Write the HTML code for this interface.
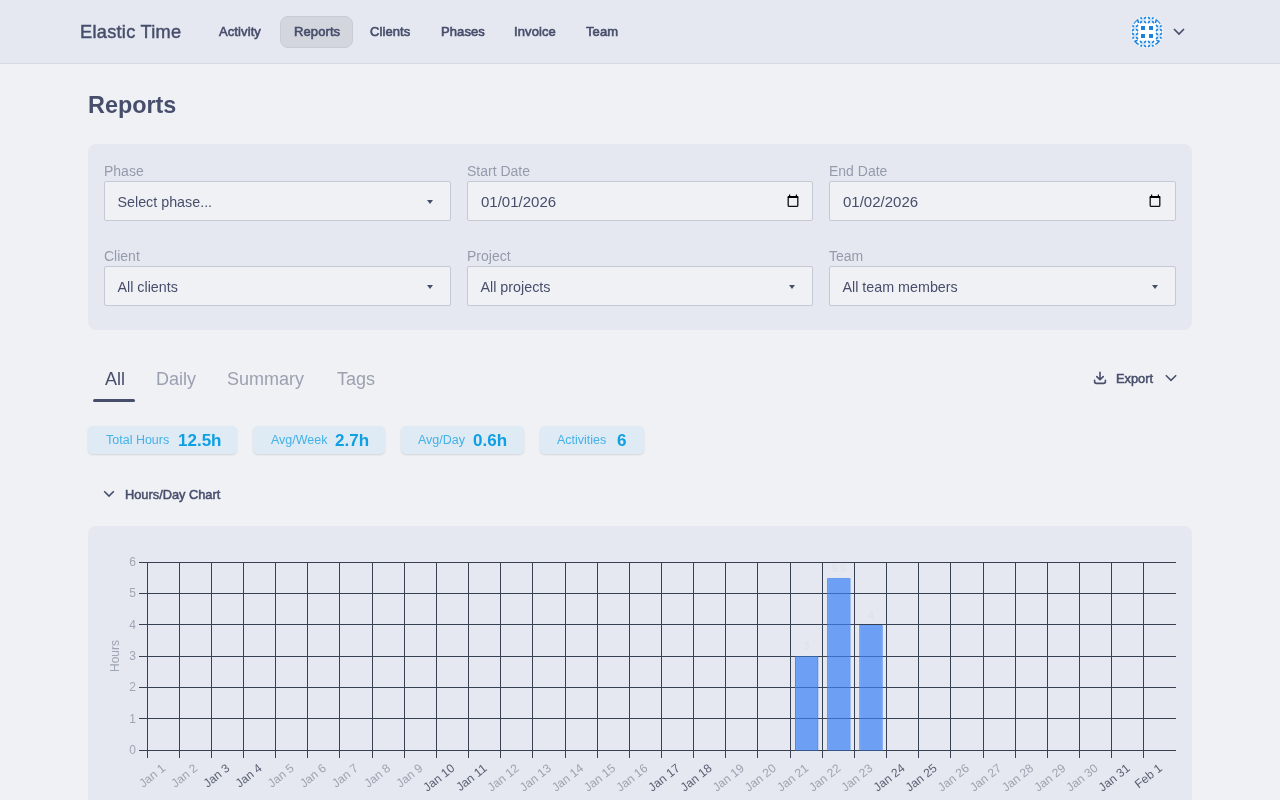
<!DOCTYPE html>
<html><head><meta charset="utf-8">
<style>
*{box-sizing:border-box;margin:0;padding:0}
html,body{width:1280px;height:800px;overflow:hidden;background:#f0f1f5;font-family:"Liberation Sans",sans-serif;color:#474e6b}
.abs{position:absolute}
#hdr{position:absolute;left:0;top:0;width:1280px;height:64px;background:#e5e8f0;border-bottom:1px solid #d6dae3}
.brand{left:80px;top:21.5px;font-size:18.2px;font-weight:normal;-webkit-text-stroke:0.45px #474e6b;letter-spacing:0.28px;white-space:nowrap;line-height:20px}
.nav{top:25px;font-size:13px;font-weight:normal;-webkit-text-stroke:0.6px #474e6b;letter-spacing:0.1px;white-space:nowrap;line-height:14px}
.pill{left:280px;top:16px;width:73px;height:32px;background:#d3d6dd;border:1px solid #c8ccd4;border-radius:8px}
h1{position:absolute;left:88px;top:92px;font-size:23.4px;font-weight:bold;line-height:26px;white-space:nowrap}
.panel{position:absolute;left:88px;top:144px;width:1104px;height:186px;background:#e5e8f0;border-radius:8px}
.lbl{position:absolute;font-size:14px;color:#959bac;line-height:16px;white-space:nowrap}
.inp{position:absolute;width:347px;height:40px;background:#f0f1f5;border:1px solid #c5c9d4;border-radius:2px}
.inp span{position:absolute;left:12.5px;top:12.3px;font-size:14.3px;line-height:16px;color:#474e6b;white-space:nowrap}
.caret{position:absolute;right:17px;top:18px;width:0;height:0;border-left:3.5px solid transparent;border-right:3.5px solid transparent;border-top:4px solid #474e6b}
.inp span.dt{font-size:15px;top:12px;left:13px}
.cal{position:absolute;right:14px;top:12px;width:12px;height:14px}
.tab{position:absolute;top:369px;font-size:18px;line-height:20px;color:#9ba1b1;white-space:nowrap}
.chip{position:absolute;top:426px;height:28px;background:#deeaf4;border-radius:5px;box-shadow:0 1px 2px rgba(0,0,0,0.12)}
.chip .l{position:absolute;top:8px;font-size:12.5px;line-height:13px;color:#45b2e6;white-space:nowrap}
.chip .v{position:absolute;top:6px;font-size:17px;line-height:18px;font-weight:bold;color:#0ea0e2;white-space:nowrap}
.chart{position:absolute;left:88px;top:526px;width:1104px;height:300px;background:#e5e8f0;border-radius:8px}
</style></head><body>
<div id="root" style="position:absolute;left:0;top:0;width:1280px;height:800px;will-change:transform">
<div id="hdr">
  <div class="abs brand">Elastic Time</div>
  <div class="abs pill"></div>
  <div class="abs nav" style="left:219px">Activity</div>
  <div class="abs nav" style="left:294px">Reports</div>
  <div class="abs nav" style="left:370px">Clients</div>
  <div class="abs nav" style="left:441px">Phases</div>
  <div class="abs nav" style="left:514px">Invoice</div>
  <div class="abs nav" style="left:586px">Team</div>
  <svg class="abs" style="left:1131px;top:16px" width="32" height="32" viewBox="0 0 32 32">
    <defs><clipPath id="avc"><circle cx="16" cy="16" r="16"/></clipPath></defs>
    <g clip-path="url(#avc)">
    <rect width="32" height="32" fill="#fff"/>
    <g fill="#1a82dc">
      <rect x="10" y="10" width="4" height="4"/><rect x="18" y="10" width="4" height="4"/>
      <rect x="10" y="18" width="4" height="4"/><rect x="18" y="18" width="4" height="4"/>
    </g>
    <path d="M8.5 4H15.5M12 0.5V7.5" stroke="#b3d7f4" stroke-width="1.1"/><ellipse cx="9.9" cy="1.9" rx="1.5" ry="0.95" transform="rotate(45 9.9 1.9)" fill="#1a82dc"/><ellipse cx="14.1" cy="1.9" rx="1.5" ry="0.95" transform="rotate(-45 14.1 1.9)" fill="#1a82dc"/><ellipse cx="9.9" cy="6.1" rx="1.5" ry="0.95" transform="rotate(-45 9.9 6.1)" fill="#1a82dc"/><ellipse cx="14.1" cy="6.1" rx="1.5" ry="0.95" transform="rotate(45 14.1 6.1)" fill="#1a82dc"/><path d="M16.5 4H23.5M20 0.5V7.5" stroke="#b3d7f4" stroke-width="1.1"/><ellipse cx="17.9" cy="1.9" rx="1.5" ry="0.95" transform="rotate(45 17.9 1.9)" fill="#1a82dc"/><ellipse cx="22.1" cy="1.9" rx="1.5" ry="0.95" transform="rotate(-45 22.1 1.9)" fill="#1a82dc"/><ellipse cx="17.9" cy="6.1" rx="1.5" ry="0.95" transform="rotate(-45 17.9 6.1)" fill="#1a82dc"/><ellipse cx="22.1" cy="6.1" rx="1.5" ry="0.95" transform="rotate(45 22.1 6.1)" fill="#1a82dc"/><path d="M8.5 28H15.5M12 24.5V31.5" stroke="#b3d7f4" stroke-width="1.1"/><ellipse cx="9.9" cy="25.9" rx="1.5" ry="0.95" transform="rotate(45 9.9 25.9)" fill="#1a82dc"/><ellipse cx="14.1" cy="25.9" rx="1.5" ry="0.95" transform="rotate(-45 14.1 25.9)" fill="#1a82dc"/><ellipse cx="9.9" cy="30.1" rx="1.5" ry="0.95" transform="rotate(-45 9.9 30.1)" fill="#1a82dc"/><ellipse cx="14.1" cy="30.1" rx="1.5" ry="0.95" transform="rotate(45 14.1 30.1)" fill="#1a82dc"/><path d="M16.5 28H23.5M20 24.5V31.5" stroke="#b3d7f4" stroke-width="1.1"/><ellipse cx="17.9" cy="25.9" rx="1.5" ry="0.95" transform="rotate(45 17.9 25.9)" fill="#1a82dc"/><ellipse cx="22.1" cy="25.9" rx="1.5" ry="0.95" transform="rotate(-45 22.1 25.9)" fill="#1a82dc"/><ellipse cx="17.9" cy="30.1" rx="1.5" ry="0.95" transform="rotate(-45 17.9 30.1)" fill="#1a82dc"/><ellipse cx="22.1" cy="30.1" rx="1.5" ry="0.95" transform="rotate(45 22.1 30.1)" fill="#1a82dc"/><path d="M0.5 12H7.5M4 8.5V15.5" stroke="#b3d7f4" stroke-width="1.1"/><ellipse cx="1.9" cy="9.9" rx="1.5" ry="0.95" transform="rotate(45 1.9 9.9)" fill="#1a82dc"/><ellipse cx="6.1" cy="9.9" rx="1.5" ry="0.95" transform="rotate(-45 6.1 9.9)" fill="#1a82dc"/><ellipse cx="1.9" cy="14.1" rx="1.5" ry="0.95" transform="rotate(-45 1.9 14.1)" fill="#1a82dc"/><ellipse cx="6.1" cy="14.1" rx="1.5" ry="0.95" transform="rotate(45 6.1 14.1)" fill="#1a82dc"/><path d="M0.5 20H7.5M4 16.5V23.5" stroke="#b3d7f4" stroke-width="1.1"/><ellipse cx="1.9" cy="17.9" rx="1.5" ry="0.95" transform="rotate(45 1.9 17.9)" fill="#1a82dc"/><ellipse cx="6.1" cy="17.9" rx="1.5" ry="0.95" transform="rotate(-45 6.1 17.9)" fill="#1a82dc"/><ellipse cx="1.9" cy="22.1" rx="1.5" ry="0.95" transform="rotate(-45 1.9 22.1)" fill="#1a82dc"/><ellipse cx="6.1" cy="22.1" rx="1.5" ry="0.95" transform="rotate(45 6.1 22.1)" fill="#1a82dc"/><path d="M24.5 12H31.5M28 8.5V15.5" stroke="#b3d7f4" stroke-width="1.1"/><ellipse cx="25.9" cy="9.9" rx="1.5" ry="0.95" transform="rotate(45 25.9 9.9)" fill="#1a82dc"/><ellipse cx="30.1" cy="9.9" rx="1.5" ry="0.95" transform="rotate(-45 30.1 9.9)" fill="#1a82dc"/><ellipse cx="25.9" cy="14.1" rx="1.5" ry="0.95" transform="rotate(-45 25.9 14.1)" fill="#1a82dc"/><ellipse cx="30.1" cy="14.1" rx="1.5" ry="0.95" transform="rotate(45 30.1 14.1)" fill="#1a82dc"/><path d="M24.5 20H31.5M28 16.5V23.5" stroke="#b3d7f4" stroke-width="1.1"/><ellipse cx="25.9" cy="17.9" rx="1.5" ry="0.95" transform="rotate(45 25.9 17.9)" fill="#1a82dc"/><ellipse cx="30.1" cy="17.9" rx="1.5" ry="0.95" transform="rotate(-45 30.1 17.9)" fill="#1a82dc"/><ellipse cx="25.9" cy="22.1" rx="1.5" ry="0.95" transform="rotate(-45 25.9 22.1)" fill="#1a82dc"/><ellipse cx="30.1" cy="22.1" rx="1.5" ry="0.95" transform="rotate(45 30.1 22.1)" fill="#1a82dc"/><path d="M2.4 7.6L6.5 3.3L7.6 7" fill="none" stroke="#1a82dc" stroke-width="1.6"/><path d="M29.6 7.6L25.5 3.3L24.4 7" fill="none" stroke="#1a82dc" stroke-width="1.6"/><path d="M6.6 24.3L3.4 25.4L7.6 28.6" fill="none" stroke="#1a82dc" stroke-width="1.6"/><path d="M25.4 24.3L28.6 25.4L24.4 28.6" fill="none" stroke="#1a82dc" stroke-width="1.6"/>
    </g>
  </svg>
  <svg class="abs" style="left:1172px;top:27px" width="14" height="10" viewBox="0 0 14 10"><path d="M2 2 L7 7 L12 2" fill="none" stroke="#474e6b" stroke-width="1.7"/></svg>
</div>

<h1>Reports</h1>

<div class="panel"></div>
<div class="lbl" style="left:104px;top:163px">Phase</div>
<div class="lbl" style="left:467px;top:163px">Start Date</div>
<div class="lbl" style="left:829px;top:163px">End Date</div>
<div class="inp" style="left:104px;top:181px"><span>Select phase...</span><i class="caret"></i></div>
<div class="inp" style="left:467px;top:181px;width:346px"><span class="dt">01/01/2026</span><svg class="cal" style="right:13px" viewBox="0 0 12 14"><path d="M2.6 0.6v2M9.4 0.6v2" stroke="#000" stroke-width="1.2"/><rect x="1.2" y="2.6" width="9.6" height="9.8" rx="1" fill="none" stroke="#111" stroke-width="1.3"/><rect x="0.8" y="2" width="10.4" height="2" fill="#000"/></svg></div>
<div class="inp" style="left:829px;top:181px"><span class="dt">01/02/2026</span><svg class="cal" viewBox="0 0 12 14"><path d="M2.6 0.6v2M9.4 0.6v2" stroke="#000" stroke-width="1.2"/><rect x="1.2" y="2.6" width="9.6" height="9.8" rx="1" fill="none" stroke="#111" stroke-width="1.3"/><rect x="0.8" y="2" width="10.4" height="2" fill="#000"/></svg></div>
<div class="lbl" style="left:104px;top:248px">Client</div>
<div class="lbl" style="left:467px;top:248px">Project</div>
<div class="lbl" style="left:829px;top:248px">Team</div>
<div class="inp" style="left:104px;top:266px"><span>All clients</span><i class="caret"></i></div>
<div class="inp" style="left:467px;top:266px;width:346px"><span>All projects</span><i class="caret"></i></div>
<div class="inp" style="left:829px;top:266px"><span>All team members</span><i class="caret"></i></div>

<div class="tab" style="left:105px;color:#474e6b">All</div>
<div class="tab" style="left:156px">Daily</div>
<div class="tab" style="left:227px">Summary</div>
<div class="tab" style="left:337px">Tags</div>
<div class="abs" style="left:93px;top:399px;width:42px;height:3px;border-radius:2px;background:#474e6b"></div>

<div class="chip" style="left:88px;width:149px"><span class="l" style="left:18px">Total Hours</span><span class="v" style="left:90px">12.5h</span></div>
<div class="chip" style="left:253px;width:132px"><span class="l" style="left:18px">Avg/Week</span><span class="v" style="left:82px">2.7h</span></div>
<div class="chip" style="left:401px;width:123px"><span class="l" style="left:17px">Avg/Day</span><span class="v" style="left:72px">0.6h</span></div>
<div class="chip" style="left:540px;width:104px"><span class="l" style="left:17px">Activities</span><span class="v" style="left:77px">6</span></div>


<svg class="abs" style="left:102px;top:488px" width="14" height="12" viewBox="0 0 14 12"><path d="M2.2 3.2 L7 8 L11.8 3.2" fill="none" stroke="#474e6b" stroke-width="1.6"/></svg>
<div class="abs" style="left:125px;top:487.5px;font-size:12.8px;line-height:14px;-webkit-text-stroke:0.5px #474e6b;white-space:nowrap">Hours/Day Chart</div>
<svg class="abs" style="left:1093px;top:371px" width="14" height="14" viewBox="0 0 14 14"><path d="M7 1.2 V8.6 M3.8 5.6 L7 8.8 L10.2 5.6 M1.6 9.2 V10.6 Q1.6 12.4 3.4 12.4 H10.6 Q12.4 12.4 12.4 10.6 V9.2" fill="none" stroke="#474e6b" stroke-width="1.6" stroke-linecap="round" stroke-linejoin="round"/></svg>
<div class="abs" style="left:1116px;top:371.5px;font-size:12.8px;line-height:14px;-webkit-text-stroke:0.5px #474e6b;white-space:nowrap">Export</div>
<svg class="abs" style="left:1164px;top:372px" width="14" height="12" viewBox="0 0 14 12"><path d="M1.8 3.2 L7 8.4 L12.2 3.2" fill="none" stroke="#474e6b" stroke-width="1.5"/></svg>
<div class="chart"></div>
<!--CHART--><svg class="abs" style="left:0;top:0;will-change:transform" width="1280" height="800" viewBox="0 0 1280 800">
<text x="806.66" y="650.20" text-anchor="middle" font-size="10.5" font-weight="bold" fill="#dfe2e9">3</text>
<text x="838.81" y="571.87" text-anchor="middle" font-size="10.5" font-weight="bold" fill="#dfe2e9">5.5</text>
<text x="870.97" y="618.87" text-anchor="middle" font-size="10.5" font-weight="bold" fill="#dfe2e9">4</text>
<rect x="139" y="750" width="1037" height="1" fill="#374151"/>
<rect x="139" y="718" width="1037" height="1" fill="#374151"/>
<rect x="139" y="687" width="1037" height="1" fill="#374151"/>
<rect x="139" y="656" width="1037" height="1" fill="#374151"/>
<rect x="139" y="624" width="1037" height="1" fill="#374151"/>
<rect x="139" y="593" width="1037" height="1" fill="#374151"/>
<rect x="139" y="562" width="1037" height="1" fill="#374151"/>
<rect x="147" y="562" width="1" height="196" fill="#374151"/>
<rect x="179" y="562" width="1" height="196" fill="#374151"/>
<rect x="211" y="562" width="1" height="196" fill="#374151"/>
<rect x="243" y="562" width="1" height="196" fill="#374151"/>
<rect x="275" y="562" width="1" height="196" fill="#374151"/>
<rect x="307" y="562" width="1" height="196" fill="#374151"/>
<rect x="339" y="562" width="1" height="196" fill="#374151"/>
<rect x="372" y="562" width="1" height="196" fill="#374151"/>
<rect x="404" y="562" width="1" height="196" fill="#374151"/>
<rect x="436" y="562" width="1" height="196" fill="#374151"/>
<rect x="468" y="562" width="1" height="196" fill="#374151"/>
<rect x="500" y="562" width="1" height="196" fill="#374151"/>
<rect x="532" y="562" width="1" height="196" fill="#374151"/>
<rect x="565" y="562" width="1" height="196" fill="#374151"/>
<rect x="597" y="562" width="1" height="196" fill="#374151"/>
<rect x="629" y="562" width="1" height="196" fill="#374151"/>
<rect x="661" y="562" width="1" height="196" fill="#374151"/>
<rect x="693" y="562" width="1" height="196" fill="#374151"/>
<rect x="725" y="562" width="1" height="196" fill="#374151"/>
<rect x="757" y="562" width="1" height="196" fill="#374151"/>
<rect x="790" y="562" width="1" height="196" fill="#374151"/>
<rect x="822" y="562" width="1" height="196" fill="#374151"/>
<rect x="854" y="562" width="1" height="196" fill="#374151"/>
<rect x="886" y="562" width="1" height="196" fill="#374151"/>
<rect x="918" y="562" width="1" height="196" fill="#374151"/>
<rect x="950" y="562" width="1" height="196" fill="#374151"/>
<rect x="983" y="562" width="1" height="196" fill="#374151"/>
<rect x="1015" y="562" width="1" height="196" fill="#374151"/>
<rect x="1047" y="562" width="1" height="196" fill="#374151"/>
<rect x="1079" y="562" width="1" height="196" fill="#374151"/>
<rect x="1111" y="562" width="1" height="196" fill="#374151"/>
<rect x="1143" y="562" width="1" height="196" fill="#374151"/>
<path d="M795.08 750.5V656.50H818.23V750.5Z M796.08 750.5V657.50H817.23V750.5Z" fill="rgb(59,130,246)" fill-rule="evenodd"/>
<rect x="796.08" y="657.50" width="21.15" height="93.00" fill="rgba(59,130,246,0.7)"/>
<path d="M827.24 750.5V578.17H850.39V750.5Z M828.24 750.5V579.17H849.39V750.5Z" fill="rgb(59,130,246)" fill-rule="evenodd"/>
<rect x="828.24" y="579.17" width="21.15" height="171.33" fill="rgba(59,130,246,0.7)"/>
<path d="M859.39 750.5V625.17H882.54V750.5Z M860.39 750.5V626.17H881.54V750.5Z" fill="rgb(59,130,246)" fill-rule="evenodd"/>
<rect x="860.39" y="626.17" width="21.15" height="124.33" fill="rgba(59,130,246,0.7)"/>
<text x="136" y="754.00" text-anchor="end" font-size="12" fill="#a0a5b3">0</text>
<text x="136" y="722.67" text-anchor="end" font-size="12" fill="#a0a5b3">1</text>
<text x="136" y="691.33" text-anchor="end" font-size="12" fill="#a0a5b3">2</text>
<text x="136" y="660.00" text-anchor="end" font-size="12" fill="#a0a5b3">3</text>
<text x="136" y="628.67" text-anchor="end" font-size="12" fill="#a0a5b3">4</text>
<text x="136" y="597.33" text-anchor="end" font-size="12" fill="#a0a5b3">5</text>
<text x="136" y="566.00" text-anchor="end" font-size="12" fill="#a0a5b3">6</text>
<text transform="translate(115,656) rotate(-90)" y="4.16" text-anchor="middle" font-size="12" fill="#a0a5b3">Hours</text>
<text transform="translate(163.58,766.45) rotate(-38.3)" y="4.16" text-anchor="end" font-size="12" fill="#9ea3b1">Jan 1</text>
<text transform="translate(195.73,766.45) rotate(-38.3)" y="4.16" text-anchor="end" font-size="12" fill="#9ea3b1">Jan 2</text>
<text transform="translate(227.88,766.45) rotate(-38.3)" y="4.16" text-anchor="end" font-size="12" fill="#5a6073">Jan 3</text>
<text transform="translate(260.04,766.45) rotate(-38.3)" y="4.16" text-anchor="end" font-size="12" fill="#5a6073">Jan 4</text>
<text transform="translate(292.19,766.45) rotate(-38.3)" y="4.16" text-anchor="end" font-size="12" fill="#9ea3b1">Jan 5</text>
<text transform="translate(324.35,766.45) rotate(-38.3)" y="4.16" text-anchor="end" font-size="12" fill="#9ea3b1">Jan 6</text>
<text transform="translate(356.50,766.45) rotate(-38.3)" y="4.16" text-anchor="end" font-size="12" fill="#9ea3b1">Jan 7</text>
<text transform="translate(388.66,766.45) rotate(-38.3)" y="4.16" text-anchor="end" font-size="12" fill="#9ea3b1">Jan 8</text>
<text transform="translate(420.81,766.45) rotate(-38.3)" y="4.16" text-anchor="end" font-size="12" fill="#9ea3b1">Jan 9</text>
<text transform="translate(452.96,766.45) rotate(-38.3)" y="4.16" text-anchor="end" font-size="12" fill="#5a6073">Jan 10</text>
<text transform="translate(485.12,766.45) rotate(-38.3)" y="4.16" text-anchor="end" font-size="12" fill="#5a6073">Jan 11</text>
<text transform="translate(517.27,766.45) rotate(-38.3)" y="4.16" text-anchor="end" font-size="12" fill="#9ea3b1">Jan 12</text>
<text transform="translate(549.43,766.45) rotate(-38.3)" y="4.16" text-anchor="end" font-size="12" fill="#9ea3b1">Jan 13</text>
<text transform="translate(581.58,766.45) rotate(-38.3)" y="4.16" text-anchor="end" font-size="12" fill="#9ea3b1">Jan 14</text>
<text transform="translate(613.73,766.45) rotate(-38.3)" y="4.16" text-anchor="end" font-size="12" fill="#9ea3b1">Jan 15</text>
<text transform="translate(645.89,766.45) rotate(-38.3)" y="4.16" text-anchor="end" font-size="12" fill="#9ea3b1">Jan 16</text>
<text transform="translate(678.04,766.45) rotate(-38.3)" y="4.16" text-anchor="end" font-size="12" fill="#5a6073">Jan 17</text>
<text transform="translate(710.20,766.45) rotate(-38.3)" y="4.16" text-anchor="end" font-size="12" fill="#5a6073">Jan 18</text>
<text transform="translate(742.35,766.45) rotate(-38.3)" y="4.16" text-anchor="end" font-size="12" fill="#9ea3b1">Jan 19</text>
<text transform="translate(774.50,766.45) rotate(-38.3)" y="4.16" text-anchor="end" font-size="12" fill="#9ea3b1">Jan 20</text>
<text transform="translate(806.66,766.45) rotate(-38.3)" y="4.16" text-anchor="end" font-size="12" fill="#9ea3b1">Jan 21</text>
<text transform="translate(838.81,766.45) rotate(-38.3)" y="4.16" text-anchor="end" font-size="12" fill="#9ea3b1">Jan 22</text>
<text transform="translate(870.97,766.45) rotate(-38.3)" y="4.16" text-anchor="end" font-size="12" fill="#9ea3b1">Jan 23</text>
<text transform="translate(903.12,766.45) rotate(-38.3)" y="4.16" text-anchor="end" font-size="12" fill="#5a6073">Jan 24</text>
<text transform="translate(935.27,766.45) rotate(-38.3)" y="4.16" text-anchor="end" font-size="12" fill="#5a6073">Jan 25</text>
<text transform="translate(967.43,766.45) rotate(-38.3)" y="4.16" text-anchor="end" font-size="12" fill="#9ea3b1">Jan 26</text>
<text transform="translate(999.58,766.45) rotate(-38.3)" y="4.16" text-anchor="end" font-size="12" fill="#9ea3b1">Jan 27</text>
<text transform="translate(1031.74,766.45) rotate(-38.3)" y="4.16" text-anchor="end" font-size="12" fill="#9ea3b1">Jan 28</text>
<text transform="translate(1063.89,766.45) rotate(-38.3)" y="4.16" text-anchor="end" font-size="12" fill="#9ea3b1">Jan 29</text>
<text transform="translate(1096.04,766.45) rotate(-38.3)" y="4.16" text-anchor="end" font-size="12" fill="#9ea3b1">Jan 30</text>
<text transform="translate(1128.20,766.45) rotate(-38.3)" y="4.16" text-anchor="end" font-size="12" fill="#5a6073">Jan 31</text>
<text transform="translate(1160.35,766.45) rotate(-38.3)" y="4.16" text-anchor="end" font-size="12" fill="#5a6073">Feb 1</text>
</svg><!--/CHART-->
</div>
</body></html>
